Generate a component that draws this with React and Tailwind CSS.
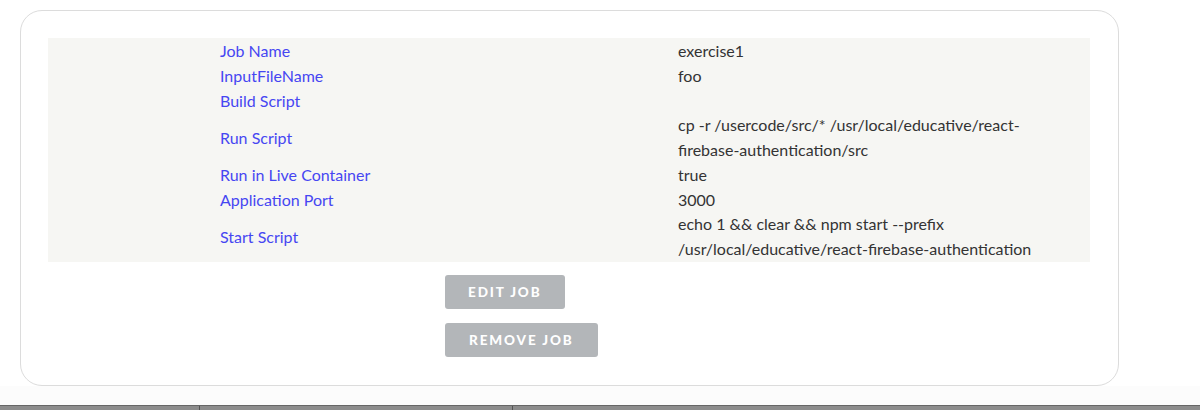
const rows = [
  { label: 'Job Name', value: ['exercise1'] },
  { label: 'InputFileName', value: ['foo'] },
  { label: 'Build Script', value: [''] },
  {
    label: 'Run Script',
    value: ['cp -r /usercode/src/* /usr/local/educative/react-', 'firebase-authentication/src'],
  },
  { label: 'Run in Live Container', value: ['true'] },
  { label: 'Application Port', value: ['3000'] },
  {
    label: 'Start Script',
    value: ['echo 1 && clear && npm start --prefix', '/usr/local/educative/react-firebase-authentication'],
  },
];

export default function App() {
  return (
    <div className="w-[1200px] h-[410px] bg-white flex flex-col overflow-hidden" style={{ fontFamily: 'Lato, "Open Sans", sans-serif' }}>
      <div className="flex-1 pt-[10px] pl-[20px]">
        <div className="w-[1099px] h-[376px] border border-[#dcdcdc] rounded-[22px] bg-white pt-[27px] pl-[27px]">
          {/* job details */}
          <div className="w-[1042px] bg-[#f6f6f3] pl-[172px] pb-px grid grid-cols-[458px_1fr] text-[16px] leading-[25px]">
            {rows.map((row) => (
              <div key={row.label} className="contents">
                <div className="text-[#4646f2] flex items-center">{row.label}</div>
                <div className="text-[#333333] min-h-[25px]">
                  {row.value.map((line, i) => (
                    <div key={i} className={row.value.length > 1 ? 'leading-[24.5px]' : ''}>{line}</div>
                  ))}
                </div>
              </div>
            ))}
          </div>

          <div className="ml-[397px] mt-[13px] flex flex-col items-start gap-[14px]">
            <button className="h-[34px] px-[23px] rounded-[3px] bg-[#b3b6b9] text-white text-[13.5px] font-black tracking-[0.14em] uppercase">
              Edit Job
            </button>
            <button className="h-[34px] px-[24px] rounded-[3px] bg-[#b3b6b9] text-white text-[13.5px] font-black tracking-[0.14em] uppercase">
              Remove Job
            </button>
          </div>
        </div>
      </div>

      {/* bottom strip */}
      <div className="h-[19px] bg-[#fcfcfc]"></div>
      <div className="h-[5px] bg-[#8c8c8c] border-t border-[#666666] flex">
        <div className="w-[200px] border-r border-[#555555]"></div>
        <div className="w-[313px] border-r border-[#555555]"></div>
      </div>
    </div>
  );
}
